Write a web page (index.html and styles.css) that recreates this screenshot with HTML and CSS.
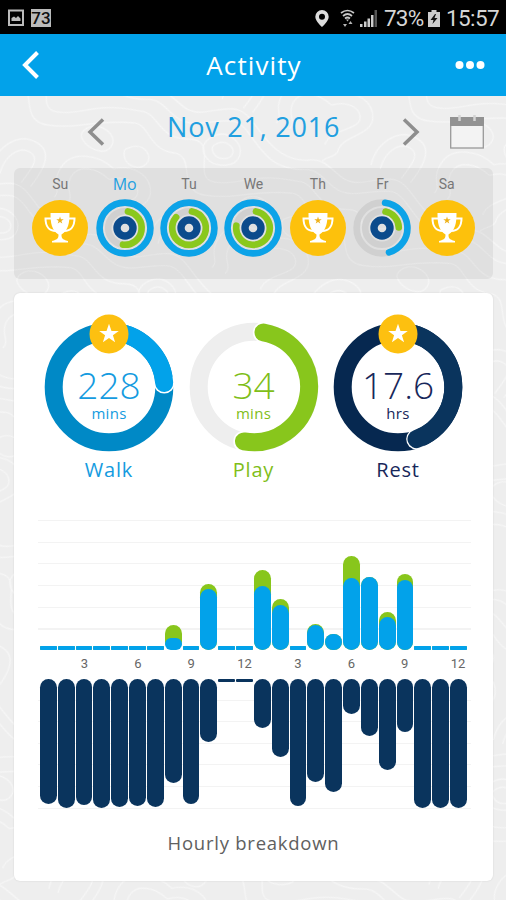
FILE: index.html
```
<!DOCTYPE html>
<html lang="en">
<head>
    <meta charset="UTF-8">
    <meta name="viewport" content="width=device-width, initial-scale=1.0">
    <title>Activity</title>
    <link rel="stylesheet" href="styles.css">
</head>
<body>
    <!-- shared shapes -->
    <svg class="defs">
        <defs>
            <pattern id="contours" width="240" height="220" patternUnits="userSpaceOnUse" patternTransform="rotate(24) scale(0.72)">
                <g fill="none" stroke="#f7f7f7" stroke-width="1.5">
                    <path d="M0 30C30 10 50 45 80 28S120 -5 150 12S205 45 240 30"/>
                    <path d="M0 44C28 28 45 64 82 44S125 14 150 28S200 62 240 44"/>
                    <path d="M0 62C25 52 38 88 78 70S102 118 135 110S175 76 240 62"/>
                    <path d="M0 80C20 74 34 106 66 96S90 142 130 132S190 96 240 80"/>
                    <path d="M0 150C24 132 52 138 60 160S30 200 34 220M34 0C36 10 22 14 20 22"/>
                    <path d="M0 166C20 150 40 154 44 168S10 200 14 220"/>
                    <path d="M84 220C78 190 96 158 126 160S150 196 144 220"/>
                    <path d="M98 220C94 196 106 174 124 176S134 200 130 220"/>
                    <path d="M240 150C212 140 176 150 172 178S186 206 180 220"/>
                    <path d="M240 166C218 158 192 164 190 184S206 206 200 220"/>
                    <path d="M110 50C124 36 150 44 152 62S128 92 112 84S98 62 110 50Z"/>
                    <path d="M118 58C126 50 142 54 142 64S126 80 118 74S112 64 118 58Z"/>
                    <path d="M10 112C24 100 44 112 38 126S12 138 6 128S4 118 10 112Z"/>
                    <path d="M184 112C196 98 226 104 224 122S196 138 186 132S178 120 184 112Z"/>
                </g>
            </pattern>
            <symbol id="trophy" viewBox="0 0 56 56">
                <circle cx="28" cy="28" r="28" fill="#fdc10c"/>
                <path d="M19 18.500H13.500C13.500 26 17 31 24 31M37 18.500H42.500C42.500 26 39 31 32 31" fill="none" stroke="#fff" stroke-width="2"/>
                <path d="M18.500 13H37.500C37.500 23 36.500 30 29.500 34.500C29.500 38 30 39.500 36 41V42.500H20V41C26 39.500 26.500 38 26.500 34.500C19.500 30 18.500 23 18.500 13Z" fill="#fff"/>
                <path d="M28 16.500L28.900 19.200H31.700L29.400 20.900L30.300 23.600L28 22L25.700 23.600L26.600 20.900L24.300 19.200H27.100Z" fill="#eeb21c"/>
            </symbol>
            <symbol id="badge" viewBox="0 0 40 40">
                <circle cx="20" cy="20" r="19.500" fill="#fdc010"/>
                <path d="M20 9.800L22.500 16.900H29.800L23.900 21.200L26.100 28.300L20 24L13.900 28.300L16.100 21.200L10.200 16.900H17.500Z" fill="#fff"/>
            </symbol>
        </defs>
    </svg>
    <svg class="backdrop"><rect width="506" height="900" fill="url(#contours)"/></svg>

    <div class="statusbar">
        <svg width="16" height="18" viewBox="0 0 16 18">
            <rect x="1" y="1.500" width="14" height="14.500" fill="none" stroke="#bbb" stroke-width="2"/>
            <path d="M3.500 12V9L6 7.500L8 9L10 7L12.500 9.500V12Z" fill="#bbb"/>
        </svg>
        <span class="level">73</span>
        <svg class="pin" width="14" height="17" viewBox="0 0 14 17">
            <path d="M7 0A6.700 6.700 0 0 0 .3 6.700C.3 11 7 17 7 17S13.700 11 13.700 6.700A6.700 6.700 0 0 0 7 0ZM7 3.700A3 3 0 0 1 7 9.700A3 3 0 0 1 7 3.700Z" fill="#ddd" fill-rule="evenodd"/>
        </svg>
        <svg class="wifi" width="15" height="19" viewBox="0 0 15 19">
            <path d="M1 4Q7.500 -1 14 4M3 7Q7.500 3 12 7M5 9.500Q7.500 7.500 10 9.500" fill="none" stroke="#c9c9c9" stroke-width="1.700"/>
            <path d="M6 10.500H9L7.500 12.500ZM3 15H7L5 18ZM8.500 15L10.500 12L12.500 15Z" fill="#b5b5b5"/>
        </svg>
        <svg class="signal" width="18" height="17" viewBox="0 0 18 17">
            <path d="M0 14H2.500V17H0ZM4 11.500H6.500V17H4ZM7.500 8.500H10V17H7.500ZM11 5H13.500V17H11Z" fill="#ccc"/>
            <path d="M14.500 0H17V17H14.500Z" fill="#555"/>
        </svg>
        <span class="percent">73%</span>
        <svg class="battery" width="12" height="17" viewBox="0 0 12 17">
            <path d="M3.500 0H8.500V2H12V17H0V2H3.500Z" fill="#ccc"/>
            <path d="M7 4L2.500 10H5.500L4.500 14L9.500 8H6.500L8 4Z" fill="#111"/>
        </svg>
        <span class="clock">15:57</span>
    </div>

    <header class="titlebar">
        <svg width="18" height="30" viewBox="0 0 18 30"><path d="M15.500 2.500L3 15L15.500 27.500" fill="none" stroke="#fff" stroke-width="4"/></svg>
        <h1>Activity</h1>
        <svg width="30" height="10" viewBox="0 0 30 10" fill="#fff"><circle cx="4.500" cy="5" r="4"/><circle cx="15" cy="5" r="4"/><circle cx="25.500" cy="5" r="4"/></svg>
    </header>

    <div class="datebar">
        <svg class="prev" width="18" height="28" viewBox="0 0 18 28"><path d="M16 1.500L3 14L16 26.500" fill="none" stroke="#8e8e8e" stroke-width="3.500"/></svg>
        <span class="date">Nov 21, 2016</span>
        <svg class="next" width="18" height="28" viewBox="0 0 18 28"><path d="M2 1.500L15 14L2 26.500" fill="none" stroke="#8e8e8e" stroke-width="3.500"/></svg>
        <svg class="calendar" width="34" height="34" viewBox="0 0 34 34">
            <rect x=".7" y="3" width="32.600" height="30" fill="#f3f3f3" stroke="#999" stroke-width="1.300"/>
            <path d="M0 2H34V11H0Z" fill="#929292"/>
            <path d="M9.500 0V6M24.500 0V6" stroke="#d4d4d4" stroke-width="2.500"/>
        </svg>
    </div>

    <div class="week" id="week"></div>

    <main class="card">
        <div class="goals">
            <div class="goal walk">
                <div class="dial">
                    <svg viewBox="0 0 130 130">
                        <circle class="ring" cx="65" cy="65" r="55.300" stroke="#0089c6"/>
                        <circle cx="120.200" cy="61" r="10.500" fill="#fff"/>
                        <path class="ring cap" d="M65 9.700A55.300 55.300 0 0 1 120.200 61" stroke="#02a2ea"/>
                    </svg>
                    <svg class="star"><use href="#badge"/></svg>
                    <span class="value">228</span>
                    <span class="unit">mins</span>
                </div>
                <span class="name">Walk</span>
            </div>
            <div class="goal play">
                <div class="dial">
                    <svg viewBox="0 0 130 130">
                        <circle class="ring" cx="65" cy="65" r="55.300" stroke="#eee"/>
                        <circle cx="74.500" cy="10.500" r="10.700" fill="#fff"/>
                        <circle cx="55" cy="119.400" r="10.700" fill="#fff"/>
                        <path class="ring cap" d="M74.500 10.500A55.300 55.300 0 0 1 55 119.400" stroke="#88c61c"/>
                    </svg>
                    <span class="value">34</span>
                    <span class="unit">mins</span>
                </div>
                <span class="name">Play</span>
            </div>
            <div class="goal rest">
                <div class="dial">
                    <svg viewBox="0 0 130 130">
                        <circle class="ring" cx="65" cy="65" r="55.300" stroke="#062850"/>
                        <circle cx="83.500" cy="117.100" r="10.300" fill="#fff"/>
                        <path class="ring cap" d="M65 9.700A55.300 55.300 0 0 1 83.500 117.100" stroke="#0a345d"/>
                    </svg>
                    <svg class="star"><use href="#badge"/></svg>
                    <span class="value">17.6</span>
                    <span class="unit">hrs</span>
                </div>
                <span class="name">Rest</span>
            </div>
        </div>

        <div class="chart">
            <div class="plot up" id="active"></div>
            <div class="hours" id="hours"></div>
            <div class="plot down" id="rest"></div>
        </div>
        <p class="caption">Hourly breakdown</p>
    </main>
    <script src="script.js"></script>
</body>
</html>
```
FILE: styles.css
```
* {
    margin: 0;
    padding: 0;
    box-sizing: border-box;
}

body {
    position: relative;
    width: 506px;
    height: 900px;
    overflow: hidden;
    background: #eee;
    font-family: "Open Sans", "Noto Sans", sans-serif;
}

svg {
    display: block;
    flex: none;
}

.defs {
    position: absolute;
    width: 0;
    height: 0;
}

/* contour lines behind everything */
.backdrop {
    position: absolute;
    z-index: -1;
    top: 0;
    left: 0;
    width: 506px;
    height: 900px;
}

/* phone status bar */
.statusbar {
    display: flex;
    align-items: center;
    height: 34px;
    padding: 2px 7px 0 8px;
    background: #000;
    color: #d6d6d6;
    font: 22.5px/34px Roboto, sans-serif;
}

.level {
    width: 20px;
    height: 18px;
    margin-left: 7px;
    background: #bbb;
    color: #111;
    font-size: 17px;
    font-weight: 500;
    line-height: 19px;
    text-align: center;
}

.pin {
    margin-left: auto;
}

.wifi {
    margin-left: 11px;
}

.signal {
    margin-left: 5px;
}

.percent {
    width: 40px;
    margin-left: 6px;
    letter-spacing: -0.8px;
}

.battery {
    margin: 0 6px 0 4px;
}

.clock {
    width: 53px;
    letter-spacing: -0.6px;
}

/* title */
.titlebar {
    display: flex;
    align-items: center;
    justify-content: space-between;
    height: 62px;
    padding: 0 21px 0 22px;
    background: #02a2ea;
    color: #fff;
}

.titlebar h1 {
    padding-left: 13px;
    font-size: 26px;
    font-weight: 400;
    letter-spacing: 1.1px;
}

.datebar {
    display: flex;
    align-items: center;
    height: 72px;
    padding-left: 87px;
}

.date {
    width: 174px;
    margin: -12px 0 0 62px;
    color: #219fe0;
    font-size: 27px;
    letter-spacing: 0.8px;
    white-space: nowrap;
}

.next {
    margin-left: 61px;
}

.calendar {
    margin-left: 30px;
}

/* week strip */
.week {
    display: flex;
    height: 111px;
    margin: 0 13px 0 14px;
    padding: 7px 14px 0;
    border-radius: 6px;
    background: rgba(0, 0, 0, 0.06);
}

.day {
    flex: 1;
    display: flex;
    flex-direction: column;
    align-items: center;
    color: #777;
    font: 14px/19px Roboto, sans-serif;
}

.day.current {
    color: #219fe0;
    font: 16px/19px "Open Sans", sans-serif;
}

.day svg {
    width: 58px;
    height: 58px;
    margin-top: 5px;
}

.day svg.won {
    width: 56px;
    height: 56px;
    margin-top: 6px;
}

.day circle {
    fill: none;
}

/* main card */
.card {
    height: 588px;
    margin: 14px 13px 0 14px;
    border-radius: 6px;
    background: #fff;
    box-shadow: 0 0 2px rgba(0, 0, 0, 0.12);
}

.goals {
    display: flex;
    justify-content: space-between;
    height: 227px;
    padding: 29px 30px 0;
}

.goal {
    display: flex;
    flex-direction: column;
    align-items: center;
}

.dial {
    position: relative;
    display: flex;
    flex-direction: column;
    align-items: center;
    width: 130px;
    height: 130px;
    padding-top: 45px;
}

.dial svg {
    position: absolute;
    top: 0;
    left: 0;
    width: 130px;
    height: 130px;
}

.dial svg.star {
    top: -8px;
    left: 45px;
    width: 40px;
    height: 40px;
}

.ring {
    fill: none;
    stroke-width: 18px;
}

.cap {
    stroke-linecap: round;
}

.value {
    position: relative;
    font-size: 37px;
    font-weight: 350;
    line-height: 36px;
}

.unit {
    position: relative;
    margin-top: 1px;
    font-size: 15px;
    line-height: 18px;
    letter-spacing: 0.3px;
}

.name {
    margin-top: 4px;
    font-size: 20px;
    line-height: 28px;
    letter-spacing: 0.8px;
}

.walk {
    color: #149be0;
}

.play {
    color: #7fbe19;
}

.rest {
    color: #18275a;
}

/* hourly chart */
.chart {
    padding: 0 22px 0 24px;
}

.plot {
    display: flex;
    gap: 1px;
    height: 130px;
    padding: 0 4px 0 2px;
}

.up {
    align-items: flex-end;
    background: repeating-linear-gradient(#f3f3f3 0 1px, transparent 1px 21.7px);
}

.down {
    align-items: flex-start;
    background: repeating-linear-gradient(transparent 0 20.6px, #f3f3f3 20.6px 21.6px);
}

.bar {
    flex: 1;
    display: flex;
    align-items: flex-end;
    border-radius: 9px;
    background: #88c61c;
}

.bar div {
    flex: 1;
    border-radius: 9px;
    background: #02a2ea;
}

.down .bar {
    background: #0a345d;
}

.bar.empty,
.bar.empty div {
    border-radius: 1px;
}

.hours {
    display: grid;
    grid-template-columns: repeat(24, 1fr);
    height: 29px;
    padding: 0 4px 0 2px;
    color: #666;
    font: 13px/28px Roboto, sans-serif;
}

.hours span {
    display: flex;
    justify-content: center;
}

.caption {
    margin-top: 19px;
    color: #606060;
    font-size: 18.5px;
    line-height: 30px;
    letter-spacing: 0.75px;
    text-align: center;
}
```
FILE: script.js
```
// arcs are in degrees, [start, end]
const days = [
    { name: 'Su', won: true },
    { name: 'Mo', current: true, walk: [0, 360], play: [10, 187] },
    { name: 'Tu', walk: [0, 360], play: [10, 310] },
    { name: 'We', walk: [0, 360], play: [10, 278] },
    { name: 'Th', won: true },
    { name: 'Fr', walk: [7, 164], play: [12, 88] },
    { name: 'Sa', won: true }
];

// [total height, walk height] for every hour
const active = [
    [4, 4], [4, 4], [4, 4], [4, 4], [4, 4], [4, 4], [4, 4], [25, 12],
    [4, 4], [66, 61], [4, 4], [4, 4], [80, 64], [51, 45], [4, 4], [26, 25],
    [16, 16], [94, 72], [73, 73], [38, 33], [76, 70], [4, 4], [4, 4], [4, 4]
];
const rest = [
    125, 129, 126, 129, 128, 127, 128, 104, 125, 63, 3, 3,
    49, 78, 127, 103, 113, 35, 57, 91, 53, 129, 129, 129
];

function arc(r, color, range) {
    const full = range[1] - range[0] === 360;
    const from = point(r, range[0]);
    const to = point(r, range[1]);
    const large = range[1] - range[0] > 180 ? 1 : 0;
    if (full) {
        return `<circle cx="29" cy="29" r="${r}" stroke="${color}" stroke-width="6.6"/>`;
    }
    return `<path d="M${from}A${r} ${r} 0 ${large} 1 ${to}" fill="none" stroke="${color}" stroke-width="6.6" stroke-linecap="round"/>`;
}

function point(r, deg) {
    const a = deg * Math.PI / 180;
    return (29 + r * Math.sin(a)).toFixed(2) + ' ' + (29 - r * Math.cos(a)).toFixed(2);
}

document.querySelector('#week').innerHTML = days.map(day => {
    const icon = day.won
        ? '<svg class="won"><use href="#trophy"/></svg>'
        : `<svg viewBox="0 0 58 58">
            ${arc(25.4, '#d0d0d0', [0, 360])}
            ${arc(16.8, '#d0d0d0', [0, 360])}
            ${arc(25.4, '#0ca3e8', day.walk)}
            ${arc(16.8, '#8ac81c', day.play)}
            <circle cx="29" cy="29" r="8" stroke="#0b4b8c" stroke-width="7.4"/>
        </svg>`;
    return `<div class="day${day.current ? ' current' : ''}"><span>${day.name}</span>${icon}</div>`;
}).join('');

document.querySelector('#active').innerHTML = active.map(([total, walk]) =>
    `<div class="bar${total < 5 ? ' empty' : ''}" style="height: ${total}px"><div style="height: ${walk}px"></div></div>`
).join('');

document.querySelector('#rest').innerHTML = rest.map(h =>
    `<div class="bar${h < 5 ? ' empty' : ''}" style="height: ${h}px"></div>`
).join('');

let hours = '';
for (let i = 1; i <= 24; i++) {
    hours += `<span>${i % 3 === 0 ? (i % 12 || 12) : ''}</span>`;
}
document.querySelector('#hours').innerHTML = hours;
```
